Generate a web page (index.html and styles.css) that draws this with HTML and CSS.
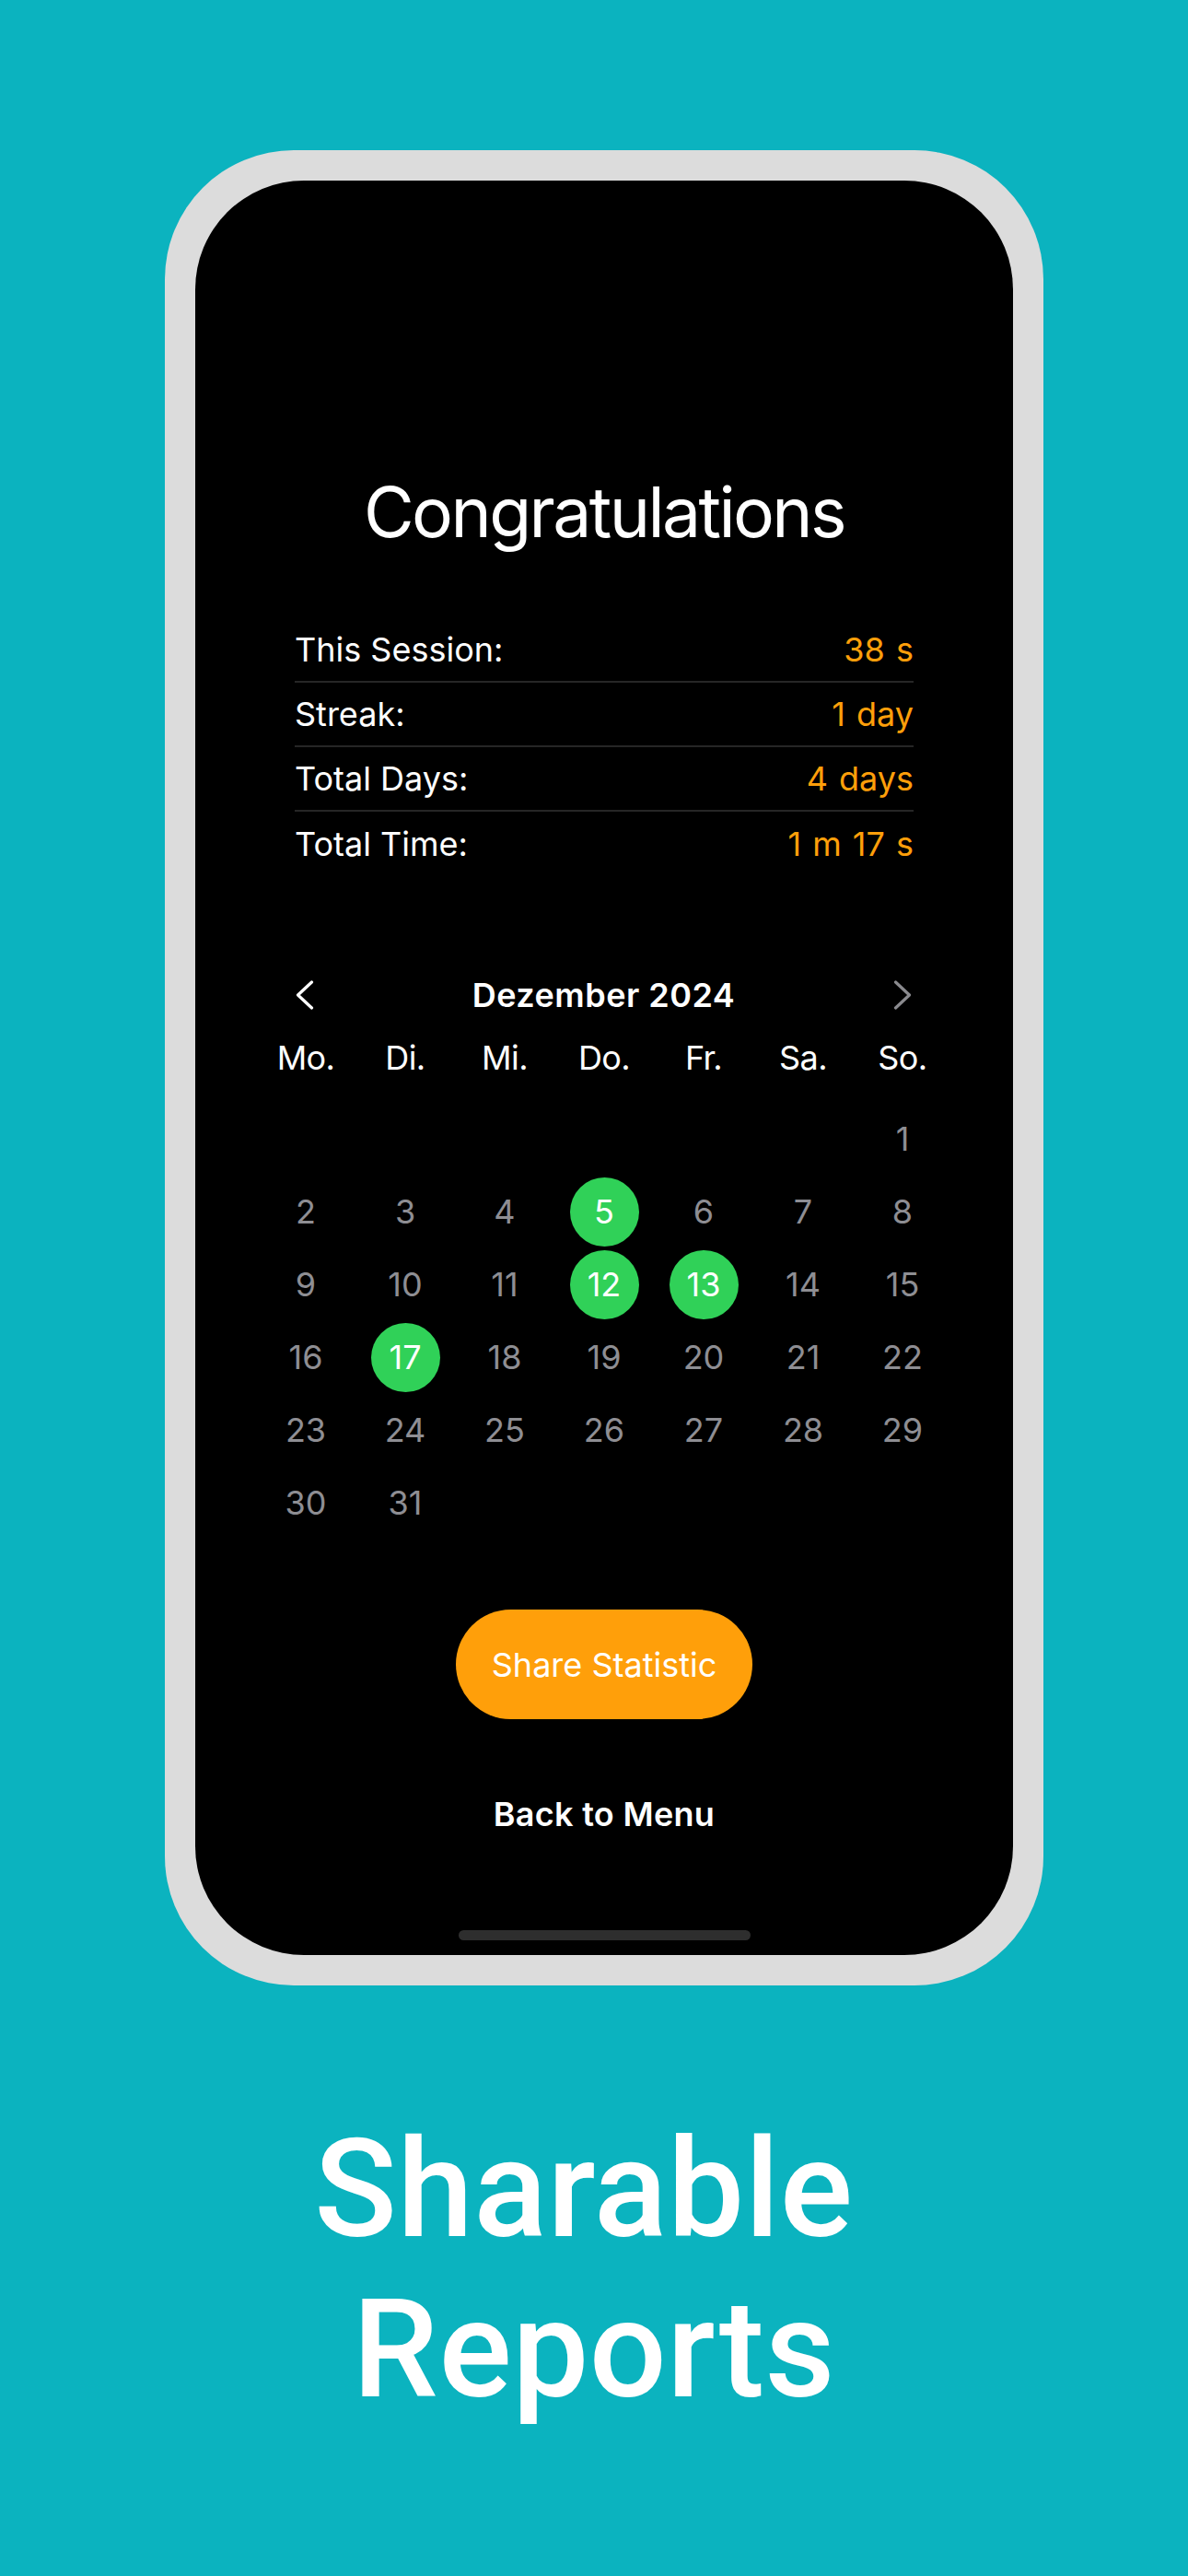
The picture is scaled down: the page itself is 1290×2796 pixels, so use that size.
FILE: index.html
```html
<!DOCTYPE html>
<html lang="en">
<head>
<meta charset="utf-8">
<title>Sharable Reports</title>
<link rel="stylesheet" href="styles.css">
</head>
<body>
<main class="page">
  <div class="phone">
    <div class="screen">
      <h1 class="title">Congratulations</h1>
      <dl class="stats">
        <div class="stat"><dt>This Session:</dt><dd>38 s</dd></div>
        <div class="stat"><dt>Streak:</dt><dd>1 day</dd></div>
        <div class="stat"><dt>Total Days:</dt><dd>4 days</dd></div>
        <div class="stat"><dt>Total Time:</dt><dd>1 m 17 s</dd></div>
      </dl>
      <section class="calendar">
        <div class="cal-header">
          <svg class="chev" viewBox="0 0 20 32" width="20" height="32" aria-hidden="true"><polyline points="17.5,2 2.5,16 17.5,30" /></svg>
          <span class="month">Dezember 2024</span>
          <svg class="chev chev-off" viewBox="0 0 20 32" width="20" height="32" aria-hidden="true"><polyline points="2.5,2 17.5,16 2.5,30" /></svg>
        </div>
        <div class="weekdays">
          <span>Mo.</span><span>Di.</span><span>Mi.</span><span>Do.</span><span>Fr.</span><span>Sa.</span><span>So.</span>
        </div>
        <div class="days">
          <span class="day"></span><span class="day"></span><span class="day"></span><span class="day"></span><span class="day"></span><span class="day"></span><span class="day">1</span>
          <span class="day">2</span><span class="day">3</span><span class="day">4</span><span class="day on"><b>5</b></span><span class="day">6</span><span class="day">7</span><span class="day">8</span>
          <span class="day">9</span><span class="day">10</span><span class="day">11</span><span class="day on"><b>12</b></span><span class="day on"><b>13</b></span><span class="day">14</span><span class="day">15</span>
          <span class="day">16</span><span class="day on"><b>17</b></span><span class="day">18</span><span class="day">19</span><span class="day">20</span><span class="day">21</span><span class="day">22</span>
          <span class="day">23</span><span class="day">24</span><span class="day">25</span><span class="day">26</span><span class="day">27</span><span class="day">28</span><span class="day">29</span>
          <span class="day">30</span><span class="day">31</span>
        </div>
      </section>
      <button class="share" type="button">Share Statistic</button>
      <button class="back" type="button">Back to Menu</button>
      <div class="home-indicator"></div>
    </div>
  </div>
  <h2 class="caption"><span class="caption-line1">Sharable</span><br>Reports</h2>
</main>
</body>
</html>
```

FILE: styles.css
```css
* { box-sizing: border-box; }
html, body { margin: 0; padding: 0; }
body {
  width: 1290px;
  height: 2796px;
  background: #0bb3bf;
  font-family: Inter, "Noto Sans", sans-serif;
  overflow: hidden;
}
.page {
  display: flex;
  flex-direction: column;
  align-items: center;
  padding-top: 163px;
}
.phone {
  width: 954px;
  height: 1992px;
  margin-left: 22px;
  padding: 33px;
  background: #dcdcdc;
  border-radius: 140px;
}
.screen {
  width: 888px;
  height: 1926px;
  background: #000;
  border-radius: 118px;
  display: flex;
  flex-direction: column;
  align-items: center;
  color: #fff;
}
.title {
  margin: 313.5px 0 0;
  font-size: 75px;
  font-weight: 400;
  line-height: 92px;
  letter-spacing: -2.6px;
}
.stats {
  margin: 69.5px 0 0;
  width: 672px;
}
.stat {
  display: flex;
  justify-content: space-between;
  align-items: center;
  height: 70px;
  border-bottom: 2px solid #262626;
  font-size: 36px;
  line-height: 50px;
}
.stat:last-child { border-bottom: 0; height: 69px; }
.stat dt, .stat dd { margin: 0; }
.stat dd { color: #ff9f0a; word-spacing: 2px; }
.calendar {
  margin-top: 104.5px;
  width: 756px;
}
.cal-header {
  display: flex;
  align-items: center;
  justify-content: space-between;
  padding: 0 44px 0 43px;
  height: 50px;
}
.chev polyline {
  fill: none;
  stroke: #fff;
  stroke-width: 3.2;
  stroke-linecap: round;
  stroke-linejoin: round;
}
.chev-off polyline { stroke: #8a8a8e; }
.month {
  font-size: 36px;
  font-weight: 600;
  line-height: 50px;
  letter-spacing: 0.5px;
}
.weekdays {
  margin-top: 18.5px;
  display: grid;
  grid-template-columns: repeat(7, 1fr);
  height: 50px;
  font-size: 36px;
  line-height: 50px;
  text-align: center;
  letter-spacing: -0.6px;
}
.days {
  margin-top: 23.5px;
  display: grid;
  grid-template-columns: repeat(7, 1fr);
  grid-auto-rows: 79px;
  font-size: 36px;
  color: #8e8e93;
}
.day {
  display: flex;
  align-items: center;
  justify-content: center;
}
.day b {
  display: flex;
  align-items: center;
  justify-content: center;
  width: 75px;
  height: 75px;
  border-radius: 50%;
  background: #30d158;
  color: #fff;
  font-weight: 400;
}
.share {
  margin-top: 76.5px;
  width: 322px;
  height: 119px;
  border: 0;
  border-radius: 60px;
  background: #ff9f0a;
  color: #fff;
  font-family: inherit;
  font-size: 36px;
  padding: 0;
}
.back {
  margin-top: 77.5px;
  height: 50px;
  border: 0;
  background: none;
  color: #fff;
  font-family: inherit;
  font-size: 36px;
  font-weight: 600;
  line-height: 50px;
  letter-spacing: 0.3px;
  padding: 0;
}
.home-indicator {
  margin-top: auto;
  margin-bottom: 16px;
  width: 317px;
  height: 11px;
  border-radius: 6px;
  background: #2e2e2e;
}
.caption {
  margin: 135px 0 0;
  font-family: Roboto, "Liberation Sans", sans-serif;
  font-weight: 500;
  font-size: 148px;
  line-height: 174px;
  letter-spacing: 0.5px;
  color: #fff;
  text-align: center;
}
.caption-line1 {
  display: inline-block;
  padding-right: 22px;
}
```
